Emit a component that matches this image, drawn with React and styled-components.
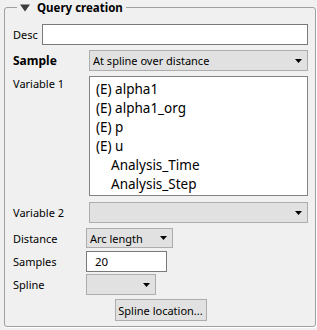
import React from 'react';
import styled, { createGlobalStyle } from 'styled-components';

const GlobalStyle = createGlobalStyle`
  html, body {
    margin: 0;
    padding: 0;
    background: #f0f0f0;
  }
  body {
    font-family: "Noto Sans", "Open Sans", sans-serif;
    font-size: 11px;
    color: #000000;
  }
`;

const Group = styled.div`
  position: relative;
  margin: 7px 1px 4px 4px;
  border: 1px solid #a0a0a0;
  border-radius: 3px;
  box-shadow: 1px 1px 0 #ffffff;
  padding: 16px 7px 5px 8px;
  display: flex;
  flex-direction: column;
`;

const Title = styled.div`
  position: absolute;
  top: -8px;
  left: 12px;
  display: flex;
  align-items: center;
  gap: 7px;
  padding: 0 3px 0 3px;
  background: #f0f0f0;
  font-weight: bold;
  font-size: 11.5px;
  line-height: 15px;
`;

const Row = styled.div`
  display: flex;
  align-items: ${(p) => (p.$top ? 'flex-start' : 'center')};
  margin-top: ${(p) => p.$mt || 0}px;
`;

const Label = styled.div`
  width: ${(p) => p.$w}px;
  flex: none;
  font-weight: ${(p) => (p.$bold ? 'bold' : 'normal')};
  font-size: ${(p) => (p.$bold ? 12 : 11)}px;
  padding-top: ${(p) => p.$pt || 0}px;
  white-space: nowrap;
`;

const TextInput = styled.div`
  box-sizing: border-box;
  height: ${(p) => p.$h || 21}px;
  width: ${(p) => (p.$w ? `${p.$w}px` : 'auto')};
  flex: ${(p) => (p.$w ? 'none' : '1')};
  background: #ffffff;
  border: 1px solid #7a7a7a;
  padding-left: ${(p) => p.$pl || 3}px;
  display: flex;
  align-items: center;
  font-size: 11.5px;
`;

const Combo = styled.div`
  box-sizing: border-box;
  height: ${(p) => p.$h || 21}px;
  width: ${(p) => (p.$w ? `${p.$w}px` : 'auto')};
  flex: ${(p) => (p.$w ? 'none' : '1')};
  background: #e1e1e1;
  border: 1px solid #adadad;
  padding: 0 5px 0 3px;
  display: flex;
  align-items: center;
  justify-content: space-between;
  font-size: 11px;
  white-space: nowrap;
`;

const ListBox = styled.div`
  box-sizing: border-box;
  flex: 1;
  height: 120px;
  background: #ffffff;
  border: 1px solid #828282;
  padding: 3px 0 0 6px;
  font-size: 13.5px;
`;

const ListItem = styled.div`
  height: 19px;
  line-height: 19px;
  padding-left: ${(p) => (p.$child ? 15 : 0)}px;
  white-space: nowrap;
`;

const ButtonRow = styled.div`
  display: flex;
  justify-content: center;
  margin-top: 4px;
`;

const Button = styled.div`
  box-sizing: border-box;
  height: 22px;
  width: 92px;
  background: #e1e1e1;
  border: 1px solid #adadad;
  display: flex;
  align-items: center;
  justify-content: center;
  font-size: 11px;
  white-space: nowrap;
`;

const Arrow = () => (
  <svg width="7" height="4" viewBox="0 0 7 4">
    <polygon points="0,0 7,0 3.5,4" fill="#000000" />
  </svg>
);

const TitleArrow = () => (
  <svg width="10" height="8" viewBox="0 0 10 8">
    <polygon points="0,0.5 10,0.5 5,7.5" fill="#3c3c3c" />
  </svg>
);

const variables = [
  { name: '(E) alpha1' },
  { name: '(E) alpha1_org' },
  { name: '(E) p' },
  { name: '(E) u' },
  { name: 'Analysis_Time', child: true },
  { name: 'Analysis_Step', child: true },
];

export default function App() {
  return (
    <>
      <GlobalStyle />
      <Group>
        <Title>
          <TitleArrow />
          <span>Query creation</span>
        </Title>
        <Row>
          <Label $w={29}>Desc</Label>
          <TextInput />
        </Row>
        <Row $mt={5}>
          <Label $w={76} $bold>Sample</Label>
          <Combo>
            <span>At spline over distance</span>
            <Arrow />
          </Combo>
        </Row>
        <Row $mt={5} $top>
          <Label $w={76}>Variable 1</Label>
          <ListBox>
            {variables.map((v) => (
              <ListItem key={v.name} $child={v.child}>{v.name}</ListItem>
            ))}
          </ListBox>
        </Row>
        <Row $mt={6}>
          <Label $w={76}>Variable 2</Label>
          <Combo>
            <span />
            <Arrow />
          </Combo>
        </Row>
        <Row $mt={5}>
          <Label $w={73}>Distance</Label>
          <Combo $w={87} $h={20}>
            <span>Arc length</span>
            <Arrow />
          </Combo>
        </Row>
        <Row $mt={3}>
          <Label $w={73}>Samples</Label>
          <TextInput $w={81} $pl={8}>20</TextInput>
        </Row>
        <Row $mt={2}>
          <Label $w={73}>Spline</Label>
          <Combo $w={70}>
            <span />
            <Arrow />
          </Combo>
        </Row>
        <ButtonRow>
          <Button>Spline location...</Button>
        </ButtonRow>
      </Group>
    </>
  );
}
